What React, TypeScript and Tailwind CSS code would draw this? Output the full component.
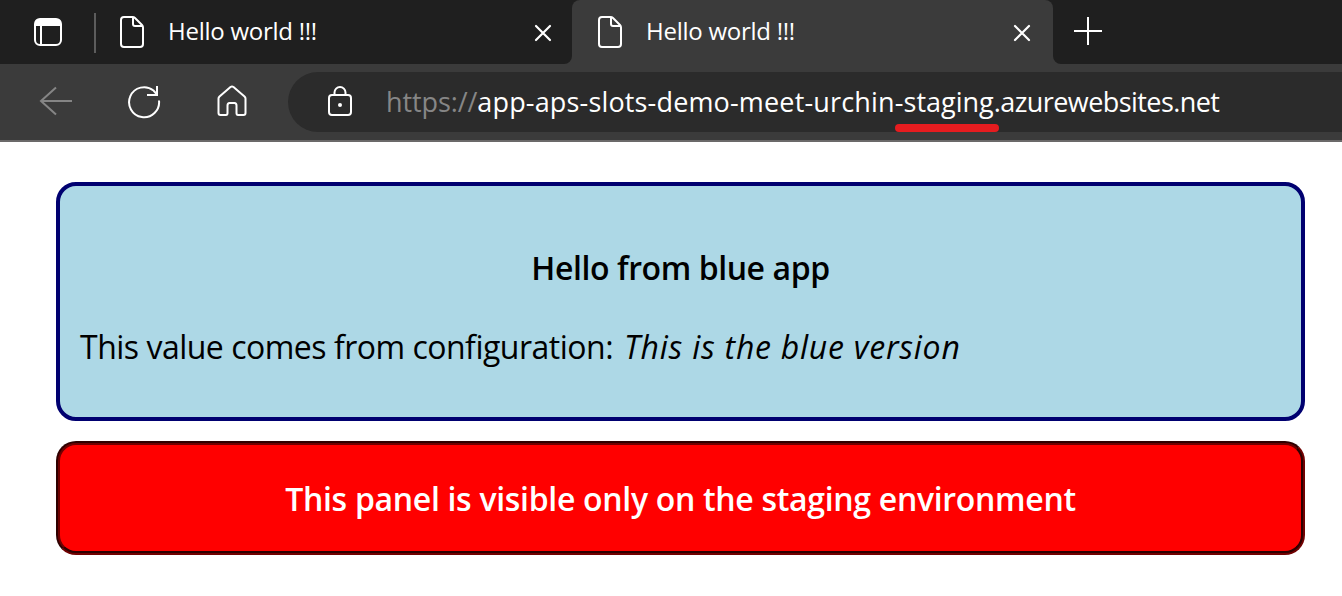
import React from "react";

function PageIcon() {
  return (
    <svg width="26" height="34" viewBox="0 0 26 34" fill="none" stroke="white" strokeWidth="2" strokeLinejoin="round" className="shrink-0">
      <path d="M5 2H13.500Q15 2 16 3L23 10Q24 11 24 12.500V29Q24 32 21 32H5Q2 32 2 29V5Q2 2 5 2Z" />
      <path d="M14 2V9Q14 11 16 11H24" />
    </svg>
  );
}

function CloseIcon() {
  return (
    <svg width="18" height="18" viewBox="0 0 18 18" stroke="white" strokeWidth="2.2" strokeLinecap="round" className="shrink-0">
      <path d="M2 2L16 16M16 2L2 16" />
    </svg>
  );
}

function TabTitle() {
  return <span className="w-[160px] whitespace-nowrap text-[24px] leading-[32px] tracking-[-0.26px] text-white">Hello world !!!</span>;
}

export default function App() {
  return (
    <div className="h-[596px] w-[1342px] overflow-hidden bg-white font-['Open_Sans',sans-serif]">
      <header className="bg-[#3b3b3b]">
        <div className="flex h-[64px]">
          <div className="flex w-[572px] items-start rounded-br-[8px] bg-[#1f1f1f]">
            <svg width="28" height="28" viewBox="0 0 28 28" fill="none" stroke="white" strokeWidth="2" className="mt-[18px] ml-[34px] shrink-0">
              <rect x="1" y="1" width="26" height="26" rx="5" />
              <path d="M1 8V5Q1 1 5 1H23Q27 1 27 5V8Z" fill="white" stroke="none" />
              <path d="M7 7V27" />
            </svg>
            <div className="mt-[13px] ml-[32px] h-[40px] w-[2px] bg-[#5c5c5c]" />
            <div className="mt-[15px] ml-[23px] flex"><PageIcon /></div>
            <div className="mt-[15px] ml-[23px] flex"><TabTitle /></div>
            <div className="mt-[24px] ml-[206px] flex"><CloseIcon /></div>
          </div>
          <div className="flex w-[481px] bg-[#1f1f1f]">
            <div className="flex w-full items-start rounded-t-[8px] bg-[#3b3b3b]">
              <div className="mt-[15px] ml-[25px] flex"><PageIcon /></div>
              <div className="mt-[15px] ml-[23px] flex"><TabTitle /></div>
              <div className="mt-[24px] ml-[207px] flex"><CloseIcon /></div>
            </div>
          </div>
          <div className="flex-1 rounded-bl-[8px] bg-[#1f1f1f] pt-[17px] pl-[21px]">
            <svg width="28" height="28" viewBox="0 0 28 28" stroke="white" strokeWidth="2"><path d="M0 14H28M14 0V28" /></svg>
          </div>
        </div>
        <div className="flex h-[78px] items-start border-b-2 border-[#6b6969] pt-[8px]">
          <svg width="34" height="30" viewBox="0 0 34 30" fill="none" stroke="#858585" strokeWidth="2" className="mt-[14px] ml-[39px] shrink-0">
            <path d="M33 15H2M17 1.500L2 15L17 28.500" />
          </svg>
          <svg width="34" height="34" viewBox="0 0 34 34" fill="none" stroke="white" strokeWidth="2" className="mt-[13px] ml-[54px] shrink-0">
            <path d="M32 15.500A15 15 0 1 1 26.500 5.500L30 9.500M30 1V10H20" />
          </svg>
          <svg width="30" height="32" viewBox="0 0 30 32" fill="none" stroke="white" strokeWidth="2" strokeLinejoin="round" className="mt-[13px] ml-[56px] shrink-0">
            <path d="M1.500 13.500Q1.500 12.500 2.500 11.500L13.500 2Q15 1 16.500 2L27.500 11.500Q28.500 12.500 28.500 13.500V28Q28.500 30 26.500 30H21Q19.500 30 19.500 28V20.500Q19.500 18 17.500 18H12.500Q10.500 18 10.500 20.500V28Q10.500 30 9 30H3.500Q1.500 30 1.500 28Z" />
          </svg>
          <div className="ml-[41px] flex h-[60px] flex-1 items-start rounded-l-[30px] bg-[#2b2b2b]">
            <svg width="24" height="32" viewBox="0 0 24 32" fill="none" stroke="white" strokeWidth="2" className="mt-[13px] ml-[40px] shrink-0">
              <rect x="1" y="10" width="22" height="20" rx="3" />
              <path d="M6.500 10V7.500A5.500 5.500 0 0 1 17.500 7.500V10" />
              <circle cx="12" cy="20" r="2" fill="white" stroke="none" />
            </svg>
            <div className="mt-[12px] ml-[34px] text-[27px] leading-[36px] whitespace-nowrap text-white">
              <span className="tracking-[-0.1px] text-[#868686]">https://</span>
              <span className="tracking-[0.16px]">app-aps-slots-demo-meet-urchin-</span>
              <span className="relative">staging<span className="absolute top-[41px] -left-[9px] h-[8px] w-[104px] rounded-[4px] bg-[#e61c1f]" /></span>
              <span className="tracking-[-0.57px]">.azurewebsites.net</span>
            </div>
          </div>
        </div>
      </header>
      <main className="flex flex-col gap-5 pt-[40px] pr-[37px] pl-[56px] text-[32px] leading-[40px] text-black">
        <section className="h-[239px] rounded-[20px] border-4 border-[#000070] bg-[#add8e6] px-5 pt-[62px]">
          <h1 className="text-center font-semibold tracking-[-0.42px]">Hello from blue app</h1>
          <p className="mt-[39px] whitespace-nowrap"><span className="tracking-[-0.5px]">This value comes from configuration: </span><em className="ml-[3px] tracking-[0.74px]">This is the blue version</em></p>
        </section>
        <section className="h-[114px] rounded-[20px] border-2 border-t-[#2e0000] border-r-[#700000] border-b-[#700000] border-l-[#2e0000] bg-[#4a0000]">
          <div className="h-full rounded-[18px] border-2 border-t-[#700000] border-r-[#2e0000] border-b-[#2e0000] border-l-[#700000] bg-[#ff0000] pt-[34px] text-center font-semibold tracking-[-0.31px] text-white">
            This panel is visible only on the staging environment
          </div>
        </section>
      </main>
    </div>
  );
}
